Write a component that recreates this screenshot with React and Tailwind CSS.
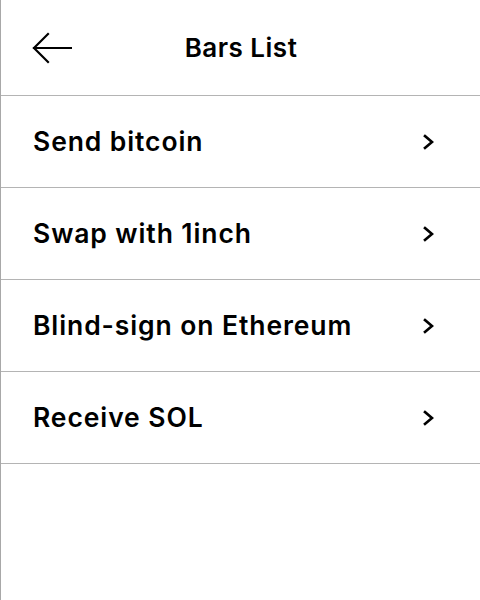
import React from "react";

const items = ["Send bitcoin", "Swap with 1inch", "Blind-sign on Ethereum", "Receive SOL"];

export default function App() {
  return (
    <div
      className="w-[480px] h-[600px] bg-white border-l border-[#a8a8a8] text-black"
      style={{ fontFamily: "Inter, 'Noto Sans', sans-serif" }}
    >
      <div className="h-[96px] flex items-center border-b border-[#b4b4b4] relative">
        <div className="pl-[31px] flex items-center">
          <svg width="40" height="32" viewBox="0 0 40 32" fill="none" stroke="black" strokeWidth="2.2" strokeLinecap="square">
            <path d="M2 16 H39" />
            <path d="M16 2 L2 16 L16 30" />
          </svg>
        </div>
        <div className="absolute left-0 right-0 top-0 h-[95px] flex items-center justify-center pointer-events-none">
          <span className="text-[26px] font-semibold tracking-[0.5px] pl-[1px]">Bars List</span>
        </div>
      </div>
      {items.map((t) => (
        <div key={t} className="h-[92px] flex items-center justify-between border-b border-[#b4b4b4] pl-[32px] pr-[44px]">
          <span className="text-[26.5px] font-semibold tracking-[0.9px]">{t}</span>
          <svg width="14" height="18" viewBox="0 0 14 18" fill="none" stroke="black" strokeWidth="2.6" strokeLinecap="square">
            <path d="M3 3 L10 9 L3 15" />
          </svg>
        </div>
      ))}
    </div>
  );
}
